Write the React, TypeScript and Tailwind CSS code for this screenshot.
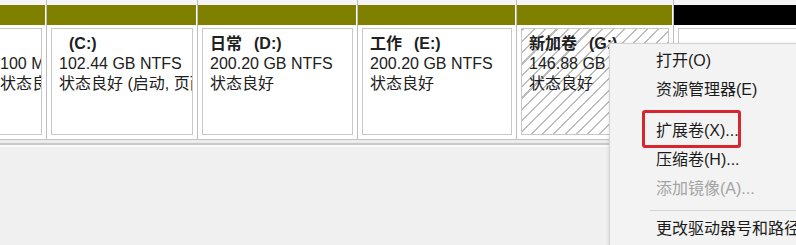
import type { ReactNode } from 'react'

const FONT = "font-['Liberation_Sans','Noto_Sans_CJK_SC',sans-serif]"

type Part = {
  w: string
  bar: string
  label?: ReactNode
  size?: string
  status?: string
  inner?: string
  hatch?: boolean
}

const PARTS: Part[] = [
  { w: 'w-[47px]', bar: 'bg-[#7f7f00]', size: '100 MB', status: '状态良好 (EFI 系统分区)', inner: 'ml-[-8px]' },
  { w: 'w-[151px]', bar: 'bg-[#7f7f00]', label: <span className="ml-[10px]">(C:)</span>, size: '102.44 GB NTFS', status: '状态良好 (启动, 页面文件, 故障转储)' },
  { w: 'w-[160px]', bar: 'bg-[#7f7f00]', label: <>日常<span className="ml-[12px]">(D:)</span></>, size: '200.20 GB NTFS', status: '状态良好' },
  { w: 'w-[159px]', bar: 'bg-[#7f7f00]', label: <>工作<span className="ml-[12px]">(E:)</span></>, size: '200.20 GB NTFS', status: '状态良好' },
  { w: 'w-[157px]', bar: 'bg-[#7f7f00]', label: <>新加卷<span className="ml-[12px]">(G:)</span></>, size: '146.88 GB NTFS', status: '状态良好', hatch: true },
  { w: 'w-[130px]', bar: 'bg-black' },
]

function Column({ p }: { p: Part }) {
  return (
    <div className={`${p.w} shrink-0 flex flex-col bg-white border-r border-[#bdbdbd] overflow-hidden`}>
      <div className="h-[5px] bg-[#f5f5f5]" />
      <div className={`h-[20px] mr-[1px] ${p.bar}`} />
      <div
        className={`flex-1 mx-[4px] mt-[3px] mb-[4px] border border-[#c8c8c8] pl-[7px] pt-[5px] text-[16px] leading-[20px] text-[#202020] whitespace-nowrap overflow-hidden ${p.inner ?? ''} ${
          p.hatch ? 'bg-[repeating-linear-gradient(135deg,#bdbdbd_0px,#bdbdbd_1.5px,#ffffff_1.5px,#ffffff_8px)]' : 'bg-white'
        }`}
      >
        <div className="font-bold h-[20px]">{p.label}</div>
        <div>{p.size}</div>
        <div>{p.status}</div>
      </div>
    </div>
  )
}

function Item({ children, disabled }: { children: ReactNode; disabled?: boolean }) {
  return (
    <div className={`h-[29px] flex items-center pl-[46px] whitespace-nowrap ${disabled ? 'text-[#a3a3a3]' : 'text-[#1b1b1b]'}`}>
      {children}
    </div>
  )
}

export default function App() {
  return (
    <div className={`relative w-[796px] h-[245px] overflow-hidden bg-[#f0f0f0] ${FONT}`}>
      <div className="flex h-[140px] overflow-hidden bg-[#f5f5f5] border-b border-[#c4c4c4]">
        {PARTS.map((p, i) => (
          <Column key={i} p={p} />
        ))}
      </div>
      <div className="h-[3px] bg-[#ececec]" />
      <div className="h-[2px] bg-[#c9c9c9]" />
      <div className="h-[2px] bg-[#fafafa]" />

      {/* 右键菜单 */}
      <div className="absolute left-[609px] top-[43px] w-[200px] h-[220px] bg-[#f3f3f3] border border-[#d2d2d2] shadow-[1px_2px_5px_rgba(0,0,0,0.18)] text-[16px] pt-[2px]">
        <Item>打开(O)</Item>
        <Item>资源管理器(E)</Item>
        <div className="h-[12px]" />
        <Item>扩展卷(X)...</Item>
        <Item>压缩卷(H)...</Item>
        <Item disabled>添加镜像(A)...</Item>
        <div className="mt-[7px] ml-[40px] h-px bg-[#d3d3d3]" />
        <div className="h-[3px]" />
        <Item>更改驱动器号和路径(C)...</Item>
      </div>

      <div className="absolute left-[642px] top-[110px] w-[99px] h-[38px] border-[3px] border-[#d7262e] rounded-[3px]" />
    </div>
  )
}
